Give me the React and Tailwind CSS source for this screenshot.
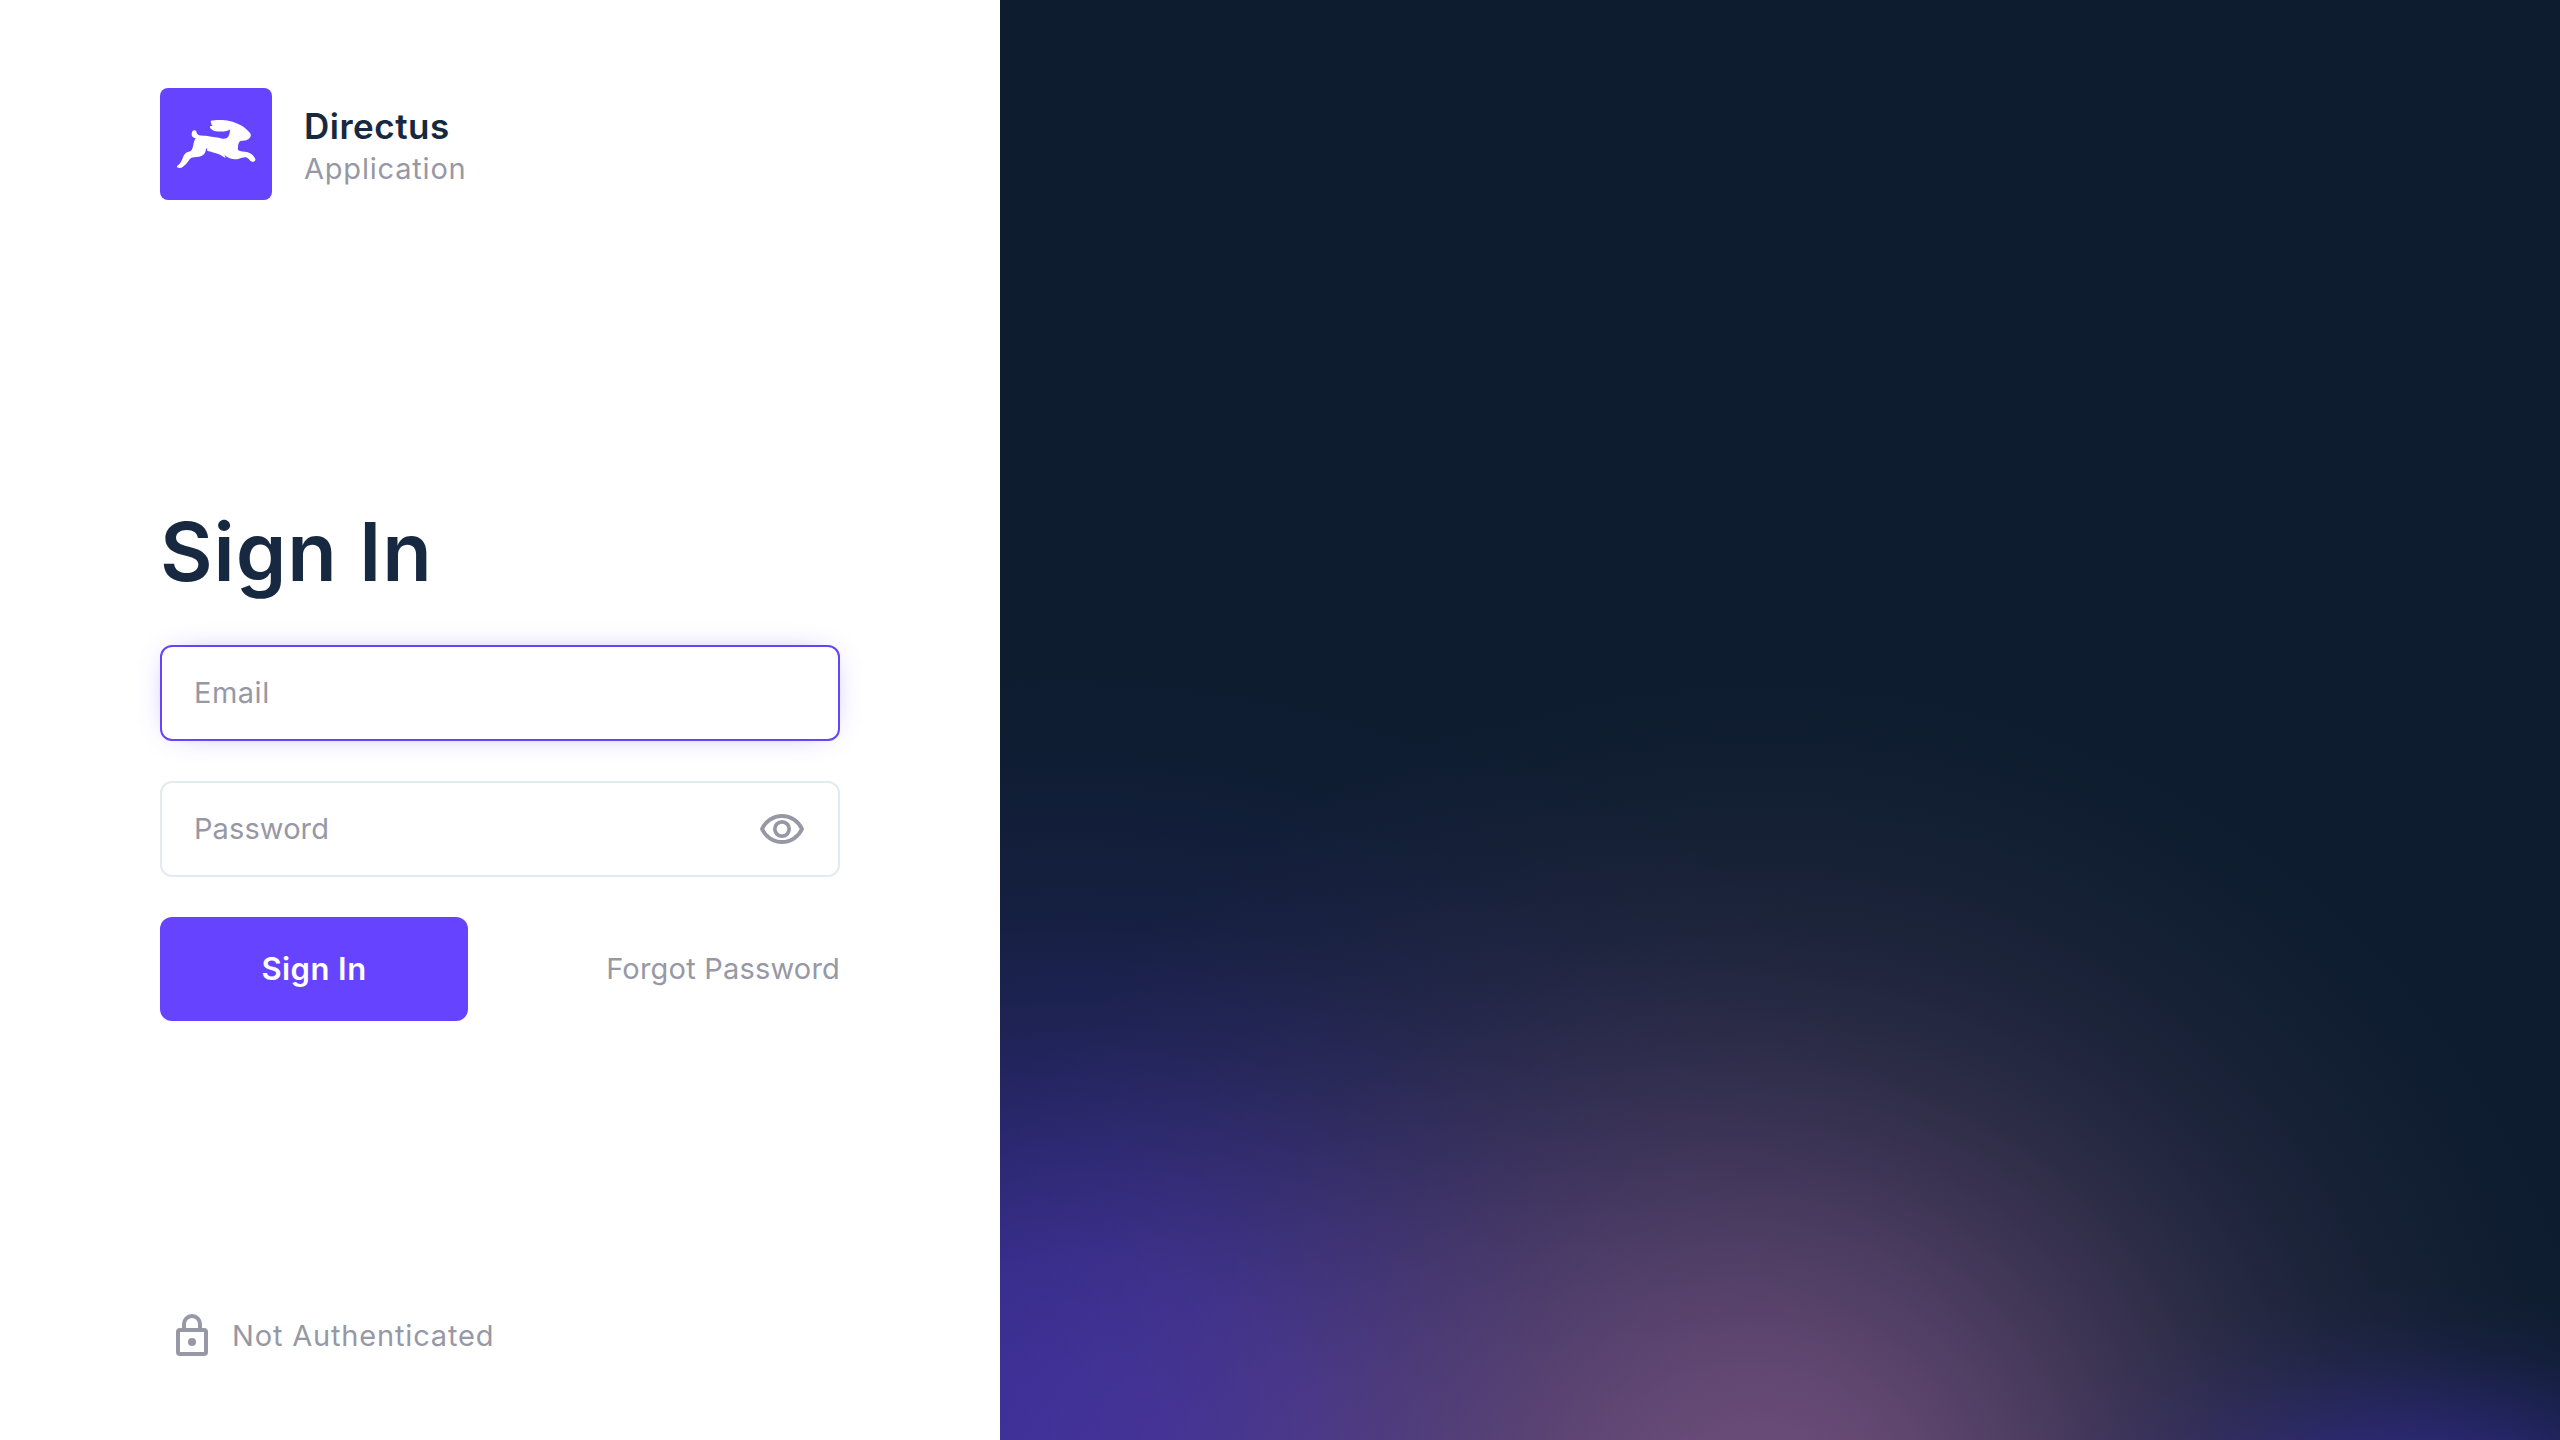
const ART =
  "bg-[#0d1c2e] bg-[radial-gradient(ellipse_420px_205px_at_1425px_1492px,#3d2ea8a8_0%,#3d2ea898_15%,#3d2ea870_32%,#3d2ea844_50%,#3d2ea81e_68%,#3d2ea80a_84%,#3d2ea800_100%),radial-gradient(ellipse_860px_860px_at_760px_1530px,#704f7c_0%,#704f7cee_10%,#704f7cd2_20%,#704f7ca8_32%,#704f7c7a_44%,#704f7c4c_57%,#704f7c28_70%,#704f7c10_84%,#704f7c00_100%),radial-gradient(ellipse_960px_880px_at_70px_1510px,#3f309e_0%,#3f309ef2_15%,#3f309ed8_28%,#3f309e9c_41%,#3f309e58_55%,#3f309e28_69%,#3f309e0e_84%,#3f309e00_100%)]";

function Rabbit() {
  return (
    <svg viewBox="0 0 336 336" className="size-28" fill="#fff">
      <path d="M152 98C168 95 192 95 208 99C236 105 256 118 268 133C273 138 274 143 271 147C265 157 256 158 244 158C236 160 233 170 234 186C239 190 246 191 254 191C270 192 281 201 286 213C287 219 283 222 277 221C270 220 268 212 261 209C253 206 246 210 235 213C218 216 206 211 197 204L193 199L197 210C188 207 184 201 177 199C165 195 154 191 142 189L141 181L138 182C137 195 131 203 117 206C108 207 98 207 93 210C86 215 83 226 74 232C69 236 67 240 60 240C53 240 49 237 51 234C60 229 64 221 68 211C71 201 76 193 86 191C96 190 98 180 100 170C102 161 104 155 107 151C97 150 93 142 96 133C97 127 103 125 107 128C111 131 109 135 112 138C119 145 129 142 142 144C159 147 173 148 187 152C202 154 210 145 210 123C204 132 182 131 167 130C157 128 150 121 150 118C149 113 154 114 159 115C155 111 153 107 152 98Z" />
    </svg>
  );
}

function EyeIcon() {
  return (
    <svg viewBox="0 0 24 24" className="size-12 shrink-0" fill="none" stroke="#9798a5">
      <path
        d="M2 12C3.7 8.3 7.5 5.5 12 5.5S20.3 8.3 22 12C20.3 15.7 16.5 18.5 12 18.5S3.7 15.7 2 12Z"
        strokeWidth="1.95"
        strokeLinejoin="round"
      />
      <circle cx="12" cy="12" r="3.6" strokeWidth="1.85" />
    </svg>
  );
}

function LockIcon() {
  return (
    <svg viewBox="0 0 24 24" className="size-12 shrink-0" fill="none" stroke="#9798a5">
      <rect x="5" y="9" width="14" height="12" rx="1" strokeWidth="2" />
      <path d="M8 9V6a4 4 0 0 1 8 0v3" strokeWidth="2" />
      <circle cx="12" cy="15" r="2" fill="#9798a5" stroke="none" />
    </svg>
  );
}

export default function App() {
  return (
    <div className="flex h-[1440px] w-[2560px] overflow-hidden bg-white font-['Inter',sans-serif] text-[29px] leading-10 text-[#9798a5]">
      <main className="flex w-[1000px] shrink-0 flex-col justify-between px-40 pt-[88px] pb-[72px]">
        <header className="flex items-center gap-8">
          <div className="rounded-lg bg-[#6644ff]">
            <Rabbit />
          </div>
          <div className="pt-[7px]">
            <div className="text-[35px] leading-[42px] font-semibold tracking-[0.5px] text-[#172940]">Directus</div>
            <div className="leading-[43px] tracking-[0.8px]">Application</div>
          </div>
        </header>

        <form className="flex flex-col pt-[19px]">
          <h1 className="mb-[43px] text-[81px] leading-[100px] font-semibold tracking-[0.9px] text-[#172940]">
            Sign In
          </h1>
          <div className="flex h-24 items-center rounded-xl border-2 border-[#6644ff] px-8 shadow-[0_0_32px_-16px_#6644ffcc]">
            <span className="tracking-[0.5px]">Email</span>
          </div>
          <div className="mt-10 flex h-24 items-center justify-between rounded-xl border-2 border-[#e4eaf1] px-8">
            <span className="tracking-[0.1px]">Password</span>
            <EyeIcon />
          </div>
          <div className="mt-10 flex items-center justify-between">
            <button
              type="button"
              className="h-[104px] w-[308px] rounded-xl bg-[#6644ff] text-[31px] font-semibold tracking-[0.45px] text-white"
            >
              Sign In
            </button>
            <a className="tracking-[0.2px]">Forgot Password</a>
          </div>
        </form>

        <footer className="flex h-16 items-center gap-4 pl-2">
          <LockIcon />
          <span className="tracking-[0.83px]">Not Authenticated</span>
        </footer>
      </main>
      <aside className={"flex-1 " + ART} />
    </div>
  );
}
